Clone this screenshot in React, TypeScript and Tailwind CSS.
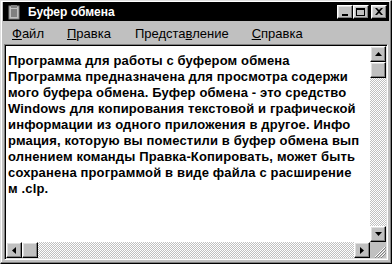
import React from 'react'

const lines = [
  'Программа для работы с буфером обмена',
  'Программа предназначена для просмотра содержи',
  'мого буфера обмена. Буфер обмена - это средство',
  'Windows для копирования текстовой и графической',
  'информации из одного приложения в другое. Инфо',
  'рмация, которую вы поместили в буфер обмена вып',
  'олнением команды Правка-Копировать, может быть',
  'сохранена программой в виде файла с расширение',
  'м .clp.',
]

const raised =
  'border border-t-white border-l-white border-r-black border-b-black shadow-[inset_-1px_-1px_0_#808080,inset_1px_1px_0_#dfdfdf] bg-[#c0c0c0]'

const dither =
  'bg-[repeating-conic-gradient(#c0c0c0_0_25%,#ffffff_0_50%)] bg-[length:2px_2px]'

function Arrow({ dir }: { dir: 'up' | 'down' | 'left' | 'right' }) {
  const pts = {
    up: '0,4 3.5,0 7,4',
    down: '0,0 3.5,4 7,0',
    left: '4,0 0,3.5 4,7',
    right: '0,0 4,3.5 0,7',
  }[dir]
  const vertical = dir === 'up' || dir === 'down'
  return (
    <div className={`w-4 h-4 flex items-center justify-center ${raised}`}>
      <svg width={vertical ? 7 : 4} height={vertical ? 4 : 7}>
        <polygon points={pts} fill="#000" />
      </svg>
    </div>
  )
}

function TitleButton({ kind }: { kind: 'min' | 'max' | 'close' }) {
  return (
    <div className={`w-4 h-[14px] flex items-center justify-center ${raised}`}>
      {kind === 'min' && <div className="w-[6px] h-[2px] bg-black mt-[6px] -ml-px" />}
      {kind === 'max' && <div className="w-[9px] h-[8px] border border-black border-t-2 -ml-px" />}
      {kind === 'close' && (
        <svg width="8" height="7" viewBox="0 0 8 7" className="-ml-px">
          <path d="M0 0h2l2 2 2-2h2L5 3.5 8 7H6L4 5 2 7H0l3-3.5z" fill="#000" />
        </svg>
      )}
    </div>
  )
}

export default function App() {
  return (
    <div className="w-[392px] h-[264px] bg-[#c0c0c0] border border-t-[#dfdfdf] border-l-[#dfdfdf] border-r-black border-b-black shadow-[inset_-1px_-1px_0_#808080,inset_1px_1px_0_#ffffff] p-[2px] pt-[1px] flex flex-col font-['Liberation_Sans',Arial,sans-serif]">
      {/* title bar */}
      <div className="h-[19px] bg-black flex items-center pl-[3px] pr-[2px]">
        <svg width="16" height="16" viewBox="0 0 16 16" className="mr-[6px]">
          <rect x="3" y="2" width="10" height="13" fill="#c0c0c0" stroke="#808080" />
          <rect x="5" y="1" width="6" height="3" fill="#808080" />
          <path d="M5 6h6M5 8h6M5 10h6M5 12h6" stroke="#404040" />
        </svg>
        <span className="text-white font-bold text-[12px] leading-none flex-1">Буфер обмена</span>
        <div className="flex">
          <TitleButton kind="min" />
          <TitleButton kind="max" />
          <div className="w-[2px]" />
          <TitleButton kind="close" />
        </div>
      </div>

      {/* menu */}
      <div className="h-[23px] pt-[3px] flex items-center text-[13px] text-black">
        <span className="ml-[9px] mr-[23px]"><u>Ф</u>айл</span>
        <span className="mr-[24px]"><u>П</u>равка</span>
        <span className="mr-[23px]">Предста<u>в</u>ление</span>
        <span><u>С</u>правка</span>
      </div>

      {/* client */}
      <div className="flex-1 ml-px mr-[1px] mb-[1px] border border-t-[#808080] border-l-[#808080] border-r-white border-b-white shadow-[inset_1px_1px_0_#000,inset_-1px_-1px_0_#dfdfdf] p-[1px] flex flex-col">
        <div className="flex flex-1 min-h-0">
          <div className="flex-1 bg-white pl-[2px] pt-[7px] text-[13px] font-bold leading-[16px] text-black whitespace-pre overflow-hidden tracking-[0.15px]">
            {lines.map((l, i) => (
              <div key={i}>{l}</div>
            ))}
          </div>
          <div className="w-4 flex flex-col">
            <Arrow dir="up" />
            <div className={`h-4 ${raised}`} />
            <div className={`flex-1 ${dither}`} />
            <Arrow dir="down" />
          </div>
        </div>
        <div className="h-4 flex">
          <Arrow dir="left" />
          <div className={`w-4 ${raised}`} />
          <div className={`flex-1 ${dither}`} />
          <Arrow dir="right" />
          <div className="w-4 bg-[#c0c0c0] flex items-end justify-end">
            <svg width="12" height="12" viewBox="0 0 12 12">
              <path d="M11 1L1 11M11 4L4 11M11 7L7 11" stroke="#fff" />
              <path d="M12 1L1 12M12 4L4 12M12 7L7 12" stroke="#808080" />
            </svg>
          </div>
        </div>
      </div>
    </div>
  )
}
